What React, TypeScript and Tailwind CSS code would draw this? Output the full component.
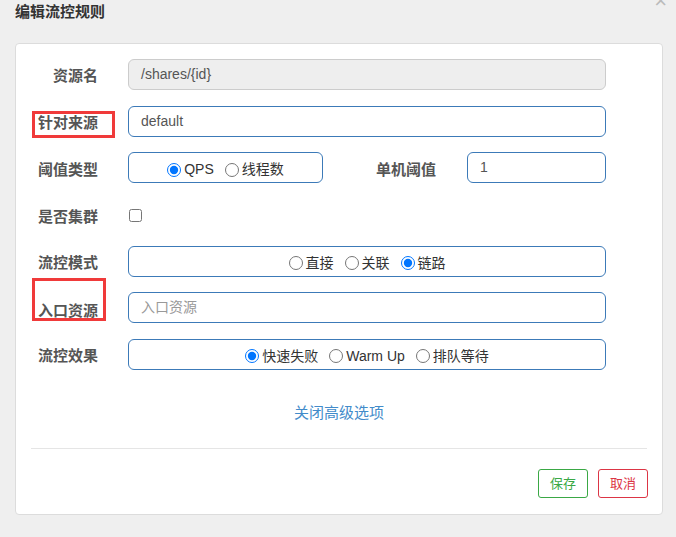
const font = { fontFamily: '"Liberation Sans", "Noto Sans CJK SC", sans-serif' };

const Label = ({ children, className = 'pt-[4px]' }: { children: React.ReactNode; className?: string }) => (
  <div className={`w-[82px] shrink-0 text-right text-[15px] font-bold text-[#555] ${className}`}>{children}</div>
);

const Radio = ({ label, checked }: { label: string; checked?: boolean }) => (
  <label className="flex items-center gap-[3px] text-[14px] text-[#333]">
    <input type="radio" checked={!!checked} readOnly className="m-0 h-[14px] w-[14px]" />
    <span>{label}</span>
  </label>
);

const RadioBox = ({ items, checked, className = '' }: { items: string[]; checked: number; className?: string }) => (
  <div className={`flex h-[31px] items-center justify-center gap-[11px] rounded-[6px] border border-[#3c7ab8] pt-[4px] ${className}`}>
    {items.map((it, i) => (
      <Radio key={it} label={it} checked={i === checked} />
    ))}
  </div>
);

export default function App() {
  return (
    <div className="relative h-[537px] w-[676px] overflow-hidden bg-[#efefef]" style={font}>
      <div className="px-[15px] pt-[2px] text-[15px] font-bold leading-[20px] text-[#333]">编辑流控规则</div>
      <span className="absolute right-[9px] top-[-9px] text-[22px] leading-[20px] text-[#bbb]">×</span>

      <div className="ml-[15px] mt-[21px] h-[472px] w-[648px] rounded-[4px] border border-[#dcdcdc] bg-white">
        <div className="flex flex-col gap-[15.67px] pt-[15px]">
          <div className="flex h-[31px] items-center">
            <Label>资源名</Label>
            <div className="ml-[30px] flex h-[31px] w-[478px] items-center rounded-[6px] border border-[#ccc] bg-[#eee] px-[12px] text-[14px] text-[#555]">
              /shares/{'{id}'}
            </div>
          </div>
          <div className="flex h-[31px] items-center">
            <Label>针对来源</Label>
            <div className="ml-[30px] flex h-[31px] w-[478px] items-center rounded-[6px] border border-[#3c7ab8] px-[12px] text-[14px] text-[#555]">
              default
            </div>
          </div>
          <div className="flex h-[31px] items-center">
            <Label>阈值类型</Label>
            <RadioBox items={['QPS', '线程数']} checked={0} className="ml-[30px] w-[195px]" />
            <div className="w-[113px] pt-[4px] text-right text-[15px] font-bold text-[#555]">单机阈值</div>
            <div className="ml-[31px] flex h-[31px] w-[139px] items-center rounded-[6px] border border-[#3c7ab8] px-[12px] text-[14px] text-[#555]">
              1
            </div>
          </div>
          <div className="flex h-[31px] items-center pt-[3px]">
            <Label className="pt-[2px]">是否集群</Label>
            <input type="checkbox" readOnly className="ml-[31px] h-[13px] w-[13px]" />
          </div>
          <div className="flex h-[31px] items-center">
            <Label>流控模式</Label>
            <RadioBox items={['直接', '关联', '链路']} checked={2} className="ml-[30px] w-[478px]" />
          </div>
          <div className="flex h-[31px] items-center">
            <Label className="pt-[6px]">入口资源</Label>
            <div className="ml-[30px] flex h-[31px] w-[478px] items-center rounded-[6px] border border-[#3c7ab8] px-[12px] text-[14px] text-[#999]">
              入口资源
            </div>
          </div>
          <div className="flex h-[31px] items-center">
            <Label>流控效果</Label>
            <RadioBox items={['快速失败', 'Warm Up', '排队等待']} checked={0} className="ml-[30px] w-[478px]" />
          </div>
        </div>

        <div className="mt-[33px] text-center text-[15px] leading-[20px] text-[#428bca]">关闭高级选项</div>

        <div className="mx-[15px] mt-[25px] border-t border-[#e5e5e5]" />

        <div className="mx-[14px] mt-[20px] flex justify-end gap-[10px]">
          <button className="h-[29px] w-[50px] rounded-[3px] border border-[#3aa845] text-[13px] text-[#3aa845]">保存</button>
          <button className="h-[29px] w-[50px] rounded-[3px] border border-[#dc3545] text-[13px] text-[#dc3545]">取消</button>
        </div>
      </div>

      <div className="absolute left-[32px] top-[111px] h-[27px] w-[83px] border-[3px] border-[#f03a3a]" />
      <div className="absolute left-[32px] top-[278px] h-[43px] w-[74px] border-[3px] border-[#f03a3a]" />
    </div>
  );
}
